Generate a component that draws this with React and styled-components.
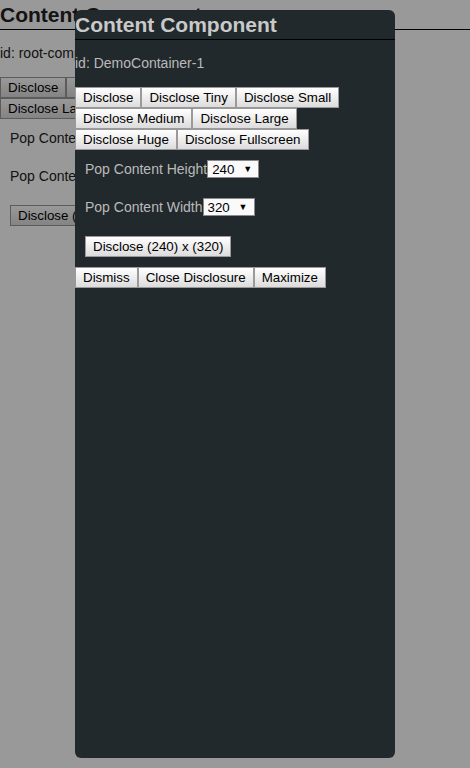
import React, { useState } from "react";
import styled, { createGlobalStyle } from "styled-components";

const GlobalStyle = createGlobalStyle`
    html, body {
        margin: 0;
        padding: 0;
        background: #fff;
        font-family: "Liberation Sans", Arial, sans-serif;
    }
`

const Page = styled.div`
    position: relative;
    width: 470px;
    height: 768px;
    overflow: hidden;
`

const Overlay = styled.div`
    position: absolute;
    inset: 0;
    background: rgba(0, 0, 0, 0.4);
`

const Dialog = styled.div`
    position: absolute;
    left: 75px;
    top: 10px;
    width: 320px;
    height: 748px;
    border-radius: 6px;
    overflow: hidden;
    background: #22292c;
`

const Panel = styled.div`
    color: ${p => p.$dark ? "#bababa" : "#222"};
    font-size: 14px;
`

const Title = styled.h2`
    margin: 0;
    padding: 3px 0 2px;
    font-size: 21px;
    line-height: 24px;
    font-weight: bold;
    color: ${p => p.$dark ? "#c9c9c9" : "#222"};
    border-bottom: 1px solid #000;
    white-space: nowrap;
`

const IdLine = styled.div`
    margin: 15px 0 16px;
    line-height: 16px;
    white-space: nowrap;
`

const ButtonRow = styled.div`
    display: flex;
    flex-wrap: wrap;
`

const Button = styled.button`
    margin: 0;
    padding: 2px 7px;
    border: 1px solid #9a9a9a;
    background: linear-gradient(#ffffff, #dcdcdc);
    color: #000;
    font-family: "Liberation Sans", Arial, sans-serif;
    font-size: 13.33px;
    line-height: 15px;
    white-space: nowrap;
    cursor: pointer;
`

const Settings = styled.div`
    display: flex;
    flex-direction: column;
    align-items: flex-start;
    padding: 0 10px;
`

const Field = styled.label`
    display: flex;
    align-items: center;
    height: 18px;
    margin: 10px 0;
    white-space: nowrap;
`

const SelectWrap = styled.span`
    position: relative;
    display: inline-block;
    &::after {
        content: "▼";
        position: absolute;
        right: 7px;
        top: 4px;
        font-size: 9px;
        color: #000;
        pointer-events: none;
    }
`

const Select = styled.select`
    appearance: none;
    display: block;
    width: 52px;
    height: 18px;
    margin: 0;
    padding: 0 0 0 4px;
    border: 1px solid #8a8a8a;
    background: #fafafa;
    color: #000;
    font-family: "Liberation Sans", Arial, sans-serif;
    font-size: 13.33px;
`

const SizeButtonBox = styled.div`
    margin: 10px 0;
`

const Footer = styled.div`
    display: flex;
`

const discloseButtons = ["Disclose", "Disclose Tiny", "Disclose Small", "Disclose Medium", "Disclose Large", "Disclose Huge", "Disclose Fullscreen"]

const ContentComponent = ({ id, dark, showFooter }) => {
    const [height, setHeight] = useState("240")
    const [width, setWidth] = useState("320")

    return (
        <Panel $dark={dark}>
            <Title $dark={dark}>Content Component</Title>
            <IdLine>id: {id}</IdLine>
            <ButtonRow>
                {discloseButtons.map(label => <Button key={label}>{label}</Button>)}
            </ButtonRow>
            <Settings>
                <Field>
                    Pop Content Height
                    <SelectWrap>
                        <Select value={height} onChange={e => setHeight(e.target.value)}>
                            <option>120</option>
                            <option>240</option>
                            <option>480</option>
                        </Select>
                    </SelectWrap>
                </Field>
                <Field>
                    Pop Content Width
                    <SelectWrap>
                        <Select value={width} onChange={e => setWidth(e.target.value)}>
                            <option>160</option>
                            <option>320</option>
                            <option>640</option>
                        </Select>
                    </SelectWrap>
                </Field>
                <SizeButtonBox>
                    <Button>Disclose ({height}) x ({width})</Button>
                </SizeButtonBox>
            </Settings>
            {showFooter && (
                <Footer>
                    <Button>Dismiss</Button>
                    <Button>Close Disclosure</Button>
                    <Button>Maximize</Button>
                </Footer>
            )}
        </Panel>
    )
}

export default function App() {
    return (
        <Page>
            <GlobalStyle/>
            <ContentComponent id="root-component"/>
            <Overlay/>
            <Dialog>
                <ContentComponent id="DemoContainer-1" dark showFooter/>
            </Dialog>
        </Page>
    )
}
